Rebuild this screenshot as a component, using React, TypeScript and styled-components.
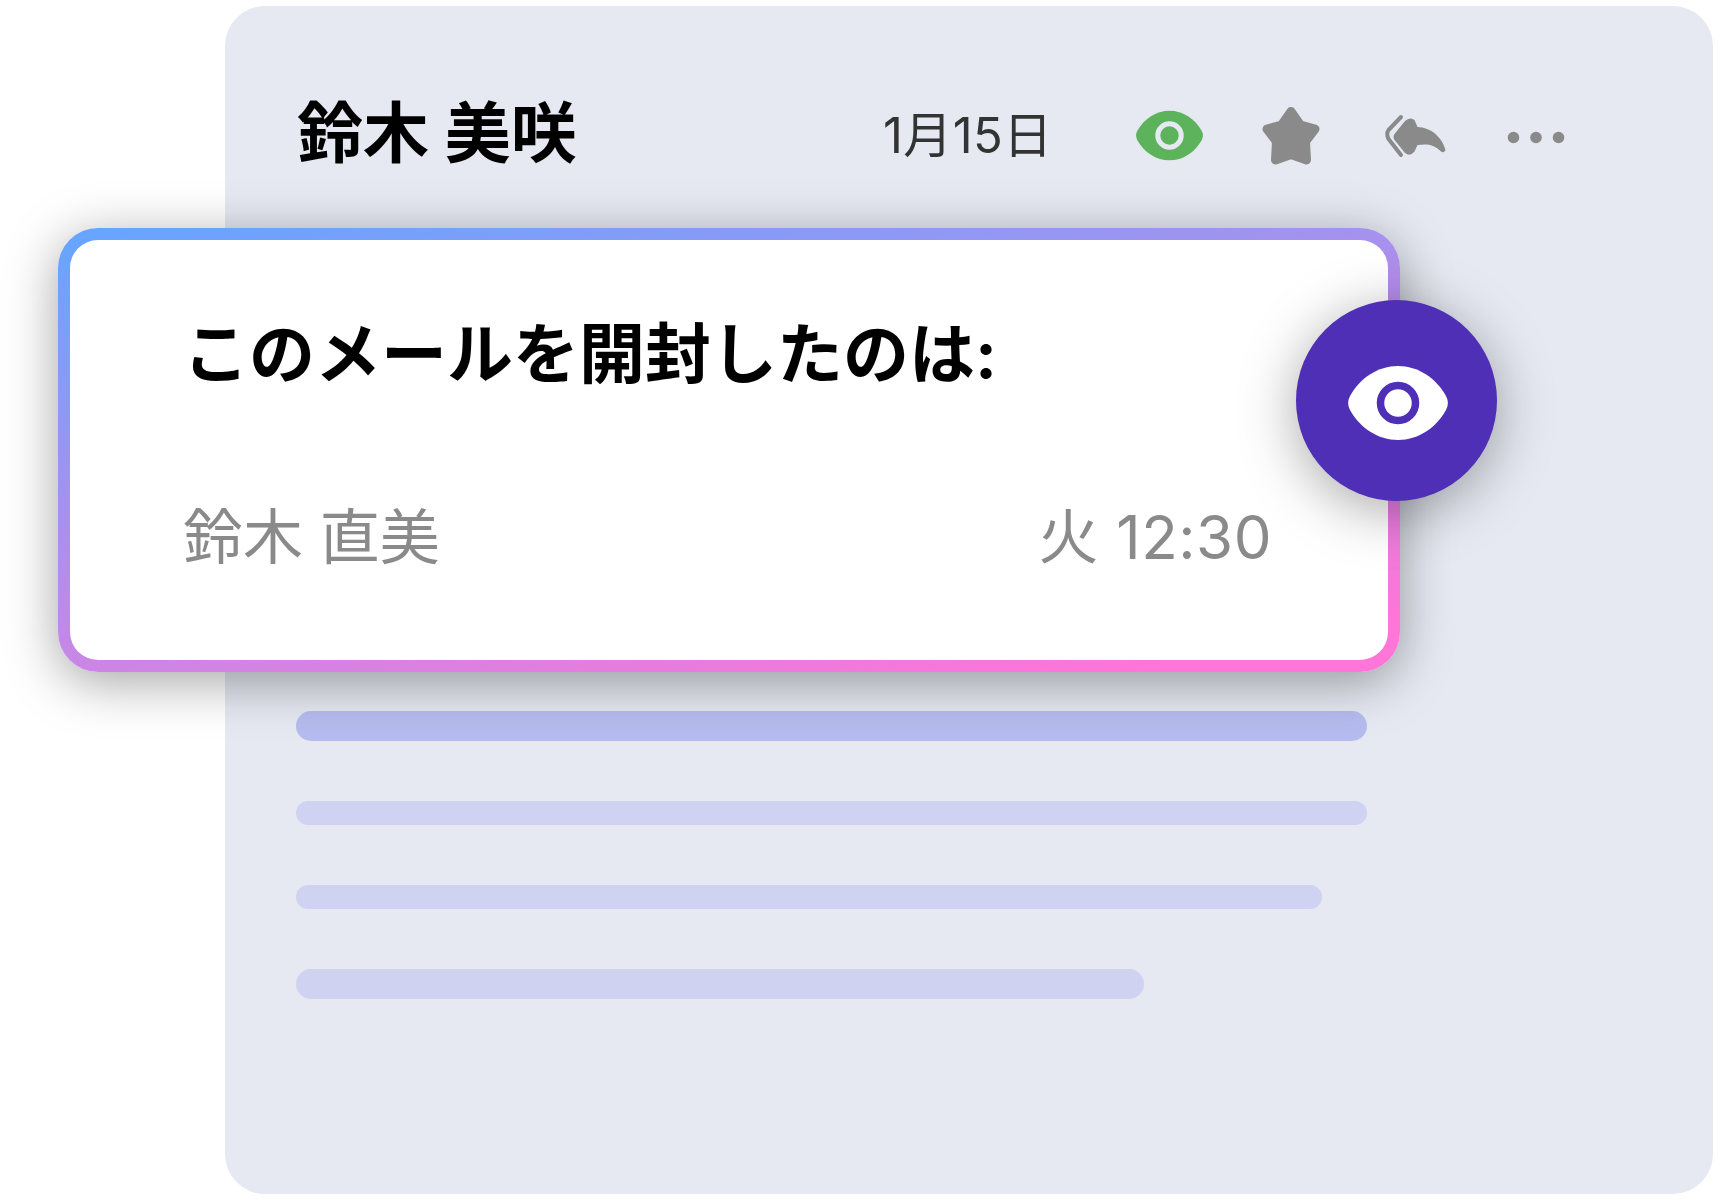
import React from "react";
import styled, { createGlobalStyle } from "styled-components";

const Global = createGlobalStyle`
  html, body { margin: 0; padding: 0; background: #fff; }
  #root { width: 1720px; height: 1200px; overflow: hidden; }
`;

const FONT = `Inter, "Noto Sans CJK JP", sans-serif`;
const PANEL = "#e6e9f2";
const MUTED = "#8a8a8a";

const Page = styled.div`
  box-sizing: border-box;
  width: 1720px;
  height: 1200px;
  padding: 6px 7px 6px 225px;
  font-family: ${FONT};
`;

const Panel = styled.main`
  box-sizing: border-box;
  height: 1188px;
  background: ${PANEL};
  border-radius: 40px;
  display: flex;
  flex-direction: column;
`;

const Header = styled.header`
  box-sizing: border-box;
  height: 222px;
  padding: 37px 0 0 72px;
  display: flex;
  align-items: center;
`;

const Sender = styled.h1`
  margin: -5px 0 0;
  font-size: 66px;
  line-height: 72px;
  font-weight: 700;
  color: #000;
  width: 586px;
  white-space: pre;
`;

const DateText = styled.span`
  font-size: 49px;
  line-height: 56px;
  letter-spacing: 0.4px;
  font-weight: 400;
  color: #333;
  width: 254px;
  white-space: pre;
`;

const Actions = styled.div`
  display: flex;
  align-items: center;
  gap: 58px;
`;

const IconSvg = styled.svg`
  display: block;
  width: 64px;
  height: 64px;
  overflow: visible;
  flex: none;
`;

const Eye = ({ fill, ring, className }: { fill: string; ring: string; className?: string }) => (
  <svg className={className} viewBox="0 0 100 74">
    <path
      d="M2 30C12 12 30 0 50 0s38 12 48 30c2.500 4.500 2.500 9.500 0 14C88 62 70 74 50 74S12 62 2 44c-2.500-4.500-2.500-9.500 0-14Z"
      fill={fill}
    />
    <circle cx="50" cy="37" r="17.500" fill="none" stroke={ring} strokeWidth="7.500" />
  </svg>
);

const StatusEye = styled(Eye)`
  display: block;
  width: 67px;
  height: 51px;
  margin: 0 -1.500px;
  flex: none;
  overflow: visible;
`;

const Overlay = styled.section`
  box-sizing: border-box;
  position: relative;
  z-index: 1;
  width: 1342px;
  height: 444px;
  margin-left: -167px;
  padding: 12px;
  border-radius: 40px;
  background: linear-gradient(168deg, #64a6ff 0%, #ff75d8 92%);
  box-shadow: 0 10px 52px rgba(0, 0, 0, 0.36);
`;

const OverlayBody = styled.div`
  box-sizing: border-box;
  height: 100%;
  padding: 78px 116px 0 113px;
  background: #fff;
  border-radius: 28px;
  display: flex;
  flex-direction: column;
  gap: 111px;
`;

const OverlayTitle = styled.h2`
  margin: 0;
  font-size: 66px;
  line-height: 72px;
  font-weight: 700;
  color: #000;
  white-space: pre;
`;

const ReaderRow = styled.div`
  display: flex;
  justify-content: space-between;
  align-items: center;
  font-size: 60px;
  line-height: 72px;
  font-weight: 400;
  color: ${MUTED};
  white-space: pre;
`;

const ReadTime = styled.span`
  letter-spacing: 0.5px;
`;

const Badge = styled.div`
  position: absolute;
  left: 1238px;
  top: 72px;
  width: 201px;
  height: 201px;
  border-radius: 50%;
  background: #4f2fb5;
  box-shadow: 0 10px 56px rgba(0, 0, 0, 0.34);
  display: flex;
  align-items: center;
  justify-content: center;
`;

const BadgeEye = styled(Eye)`
  display: block;
  width: 100px;
  height: 74px;
  position: relative;
  top: 2px;
  left: 1px;
  overflow: visible;
`;

const Lines = styled.div`
  margin: 39px 0 0 71px;
  display: flex;
  flex-direction: column;
  gap: 60px;
`;

const Line = styled.div<{ $w: number; $h: number; $strong?: boolean }>`
  width: ${(p) => p.$w}px;
  height: ${(p) => p.$h}px;
  border-radius: 15px;
  background: ${(p) => (p.$strong ? "#b7bcf0" : "#cfd2f0")};
`;

export default function App() {
  return (
    <>
      <Global />
      <Page>
        <Panel>
          <Header>
            <Sender>鈴木 美咲</Sender>
            <DateText>1月15日</DateText>
            <Actions>
              <StatusEye fill="#5cb35c" ring={PANEL} />
              <IconSvg viewBox="0 0 64 64">
                <polygon
                  points="32,7.500 41.500,21 56,25 46.500,37.500 47.500,56 32,50.500 16.500,56 17.500,37.500 8,25 22.500,21"
                  fill={MUTED}
                  stroke={MUTED}
                  strokeWidth="9"
                  strokeLinejoin="round"
                />
              </IconSvg>
              <IconSvg viewBox="0 0 64 64">
                <path
                  d="M20 13 7.500 26Q5 30 7.500 35L20 51"
                  fill="none"
                  stroke={MUTED}
                  strokeWidth="4"
                  strokeLinecap="round"
                />
                <path
                  d="M13.500 30 24 17Q29 12.500 33.500 16L36.500 23C50 23.500 61 33 64.500 46Q62.500 50 59.500 47C53 40.500 46 39.500 36.500 41L33.500 47.500Q29 53 24 49L13.500 36Q11.500 33 13.500 30Z"
                  fill={MUTED}
                />
              </IconSvg>
              <IconSvg viewBox="0 0 64 64">
                <g fill={MUTED}>
                  <circle cx="10.500" cy="33.500" r="5.800" />
                  <circle cx="33" cy="33.500" r="5.800" />
                  <circle cx="55.500" cy="33.500" r="5.800" />
                </g>
              </IconSvg>
            </Actions>
          </Header>
          <Overlay>
            <OverlayBody>
              <OverlayTitle>このメールを開封したのは:</OverlayTitle>
              <ReaderRow>
                <span>鈴木 直美</span>
                <ReadTime>火 12:30</ReadTime>
              </ReaderRow>
            </OverlayBody>
            <Badge>
              <BadgeEye fill="#fff" ring="#4f2fb5" />
            </Badge>
          </Overlay>
          <Lines>
            <Line $w={1071} $h={30} $strong />
            <Line $w={1071} $h={24} />
            <Line $w={1026} $h={24} />
            <Line $w={848} $h={30} />
          </Lines>
        </Panel>
      </Page>
    </>
  );
}
